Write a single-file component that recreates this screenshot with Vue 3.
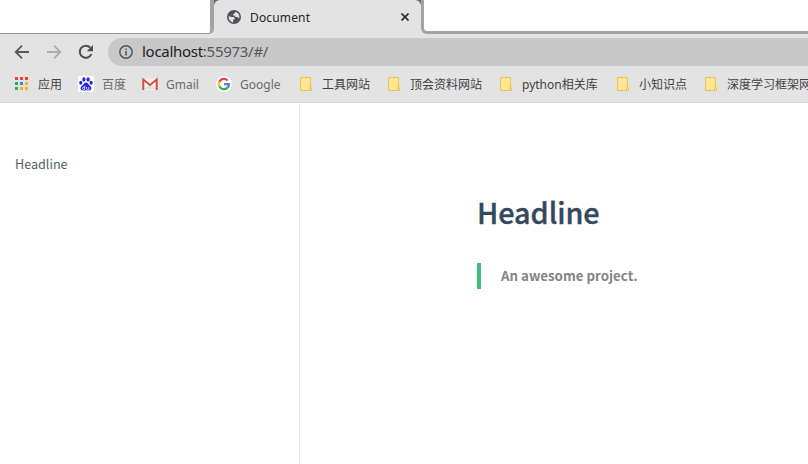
<script setup>
const bookmarks = [
  { label: '应用', icon: 'apps', tone: 'dark' },
  { label: '百度', icon: 'baidu', tone: 'muted' },
  { label: 'Gmail', icon: 'gmail', tone: 'muted' },
  { label: 'Google', icon: 'google', tone: 'muted' },
  { label: '工具网站', icon: 'folder', tone: 'dark' },
  { label: '顶会资料网站', icon: 'folder', tone: 'dark' },
  { label: 'python相关库', icon: 'folder', tone: 'dark' },
  { label: '小知识点', icon: 'folder', tone: 'dark' },
  { label: '深度学习框架网', icon: 'folder', tone: 'dark' },
]
const appColors = ['#ea4335', '#ea4335', '#ea4335', '#34a853', '#1a8cff', '#fbb605', '#34a853', '#fbb605', '#fbb605']
</script>

<template>
  <div class="window">
    <header class="tabs">
      <div class="blank left"></div>
      <div class="tab">
        <svg class="globe" width="14" height="14" viewBox="0 0 14 14">
          <circle cx="7" cy="7" r="7" fill="#505357" />
          <path d="M8.2 1.8C10.8 2.3 12.4 4.4 12.4 7c0 .6-.1 1-.3 1.500-.7-.2-.9-1.500-2-1.600L8 6.700 7.500 5.600 6 5.400V4.200h1.200L7.300 3h1z" fill="#e3e3e3" />
          <path d="M1.600 6.300 4.800 7h2l1 1.200-.2 1-1.300.3-.2 2.900C3.500 12 1.600 9.700 1.600 7z" fill="#e3e3e3" />
        </svg>
        <span class="tab-title">Document</span>
        <svg class="close" width="8" height="8" viewBox="0 0 8 8"><path d="M.5.5l7 7M7.500.5l-7 7" stroke="#2b2b2b" stroke-width="1.600" /></svg>
      </div>
      <div class="blank right"></div>
    </header>
    <div class="toolbar">
      <svg class="nav" width="16" height="16" viewBox="0 0 16 16"><path d="M15 8H2M8 1.700 1.700 8 8 14.300" fill="none" stroke="#55585c" stroke-width="1.800" /></svg>
      <svg class="nav" width="16" height="16" viewBox="0 0 16 16"><path d="M1 8h13M8 1.700 14.300 8 8 14.300" fill="none" stroke="#acacac" stroke-width="1.800" /></svg>
      <svg class="nav" width="16" height="16" viewBox="0 0 16 16"><path d="M13.400 10A6 6 0 1 1 12.300 3.800" fill="none" stroke="#4b4e52" stroke-width="2" /><path d="M15 1v6.200H8.800z" fill="#4b4e52" /></svg>
      <div class="address">
        <svg width="14" height="14" viewBox="0 0 14 14"><circle cx="7" cy="7" r="6.200" fill="none" stroke="#55585c" stroke-width="1.500" /><path d="M7 6v4.500M7 3.500v1.600" stroke="#55585c" stroke-width="1.600" /></svg>
        <span class="url"><b>localhost</b>:55973/#/</span>
      </div>
    </div>
    <nav class="bookmarks">
      <div v-for="b in bookmarks" :key="b.label" class="bookmark" :class="b.tone">
        <svg v-if="b.icon === 'apps'" width="16" height="16" viewBox="0 0 16 16">
          <rect v-for="(c, i) in appColors" :key="i" :x="1 + (i % 3) * 5" :y="1 + Math.floor(i / 3) * 5" width="3" height="3" :fill="c" />
        </svg>
        <svg v-else-if="b.icon === 'baidu'" width="16" height="16" viewBox="0 0 16 16">
          <rect width="16" height="16" rx="1.500" fill="#fff" />
          <g fill="#2529d8">
            <ellipse cx="5.900" cy="3.400" rx="1.600" ry="2.200" /><ellipse cx="10.100" cy="3.400" rx="1.600" ry="2.200" />
            <ellipse cx="2.800" cy="6.800" rx="1.600" ry="2" /><ellipse cx="13.100" cy="6.800" rx="1.600" ry="2" />
            <path d="M8 6.500c1.800 0 2.500 2 4 3.300 2.300 2 1.600 4.700-.9 4.700-1.200 0-2-.3-3.100-.3s-2 .3-3.100.3c-2.500 0-3.200-2.700-.9-4.700 1.500-1.300 2.200-3.300 4-3.300z" />
          </g>
          <path d="M6.700 9.500v4H5.300q-1-.2-1-1.100t1-1.100h1.400M8.500 11v1.700q.1.800 1 .8h1.400V11" fill="none" stroke="#fff" stroke-width=".8" />
        </svg>
        <svg v-else-if="b.icon === 'gmail'" width="16" height="16" viewBox="0 0 16 16">
          <path d="M1 3h14v11H1z" fill="#f5f4f3" /><path d="m2 13 6-5 6 5" fill="#dedede" />
          <path d="M1.300 14V3.500L8 9l6.700-5.500V14" fill="none" stroke="#d84c40" stroke-width="2" />
        </svg>
        <svg v-else-if="b.icon === 'google'" width="16" height="16" viewBox="0 0 16 16">
          <circle cx="8" cy="8" r="8" fill="#fff" />
          <g fill="none" stroke-width="2.300">
            <path d="M3.400 5.700A5 5 0 0 1 11.600 4.500" stroke="#ea4335" />
            <path d="M3.400 5.700a5 5 0 0 0 0 4.700" stroke="#fbbc05" />
            <path d="M3.400 10.400a5 5 0 0 0 7.900 1.400" stroke="#34a853" />
            <path d="M8 8.200h5a5 5 0 0 1-1.700 3.600" stroke="#4285f4" />
          </g>
        </svg>
        <svg v-else width="16" height="16" viewBox="0 0 16 16">
          <path d="M2.500 1.500h10v13h-10z" fill="#ffe594" stroke="#eac452" />
          <path d="M11.500 14.500v-3q0-1 1-1t1 1v3z" fill="#ffe594" stroke="#eac452" />
        </svg>
        <span>{{ b.label }}</span>
      </div>
    </nav>
    <div class="page">
      <aside><a>Headline</a></aside>
      <main>
        <h1>Headline</h1>
        <blockquote><p>An awesome project.</p></blockquote>
      </main>
    </div>
  </div>
</template>

<style>
body { margin: 0; overflow: hidden; }
</style>
<style scoped>
.window { width: 808px; height: 464px; overflow: hidden; background: #fff; font-family: "Noto Sans", "Noto Sans CJK SC", sans-serif; }
svg { display: block; flex: none; }
.tabs { display: flex; height: 34px; background: linear-gradient(#686868 0 5px, #e3e3e3 5px); }
.blank { box-sizing: border-box; background: #fff; }
.left { width: 214px; border-right: 4px solid #a3a3a3; border-bottom: 1px solid #969696; border-bottom-right-radius: 5px; }
.tab { display: flex; align-items: center; width: 207px; box-sizing: border-box; padding: 0 12px 0 13px; background: #e3e3e3; border-radius: 6px 6px 0 0; }
.globe { margin-right: 9px; }
.tab-title { font-size: 12px; line-height: 20px; letter-spacing: .15px; color: #252525; margin-top: 1px; }
.close { margin-left: auto; }
.right { flex: 1; border-left: 3px solid #a3a3a3; border-bottom: 3px solid #a3a3a3; border-bottom-left-radius: 6px; }
.toolbar { display: flex; align-items: center; height: 36px; box-sizing: border-box; padding: 0 0 0 14px; background: #e3e3e3; }
.nav { margin-right: 16px; }
.address { display: flex; align-items: center; flex: 1; height: 28px; margin-left: -2px; padding-left: 11px; background: #c8c8c8; border-radius: 14px 0 0 14px; }
.url { margin: -2px 0 0 9px; font-size: 15px; line-height: 22px; color: #53565a; white-space: nowrap; letter-spacing: -.28px; }
.url b { font-weight: 400; color: #202124; }
.bookmarks { display: grid; grid-template-columns: 64px 64px 74px 82px 88px 112px 117px 88px 150px; align-items: center; height: 33px; box-sizing: border-box; padding: 0 0 4px 14px; background: #e3e3e3; border-bottom: 1px solid #d8d8d8; }
.bookmark { display: flex; align-items: center; gap: 8px; font-size: 12px; line-height: 18px; white-space: nowrap; }
.bookmark span { margin-top: 1px; }
.dark { color: #3f4246; }
.muted { color: #6a6b6d; }
.page { display: flex; height: 361px; font-family: "Source Sans Pro", "Noto Sans CJK SC", sans-serif; }
aside { width: 300px; box-sizing: border-box; padding: 51px 15px; border-right: 1px solid #ebebeb; font-size: 12.6px; line-height: 20px; color: #505d6b; }
aside a { display: block; }
main { padding: 89px 0 0 177px; }
h1 { margin: 0 0 31px; font-size: 28.8px; line-height: 40px; font-weight: 500; color: #34495e; -webkit-text-stroke: .35px #34495e; letter-spacing: -.06px; }
blockquote { box-sizing: border-box; height: 26px; margin: 0; padding-left: 20px; border-left: 4px solid #42b983; }
p { margin: 0; font-size: 13.3px; line-height: 26px; font-weight: 600; color: #858585; }
</style>
